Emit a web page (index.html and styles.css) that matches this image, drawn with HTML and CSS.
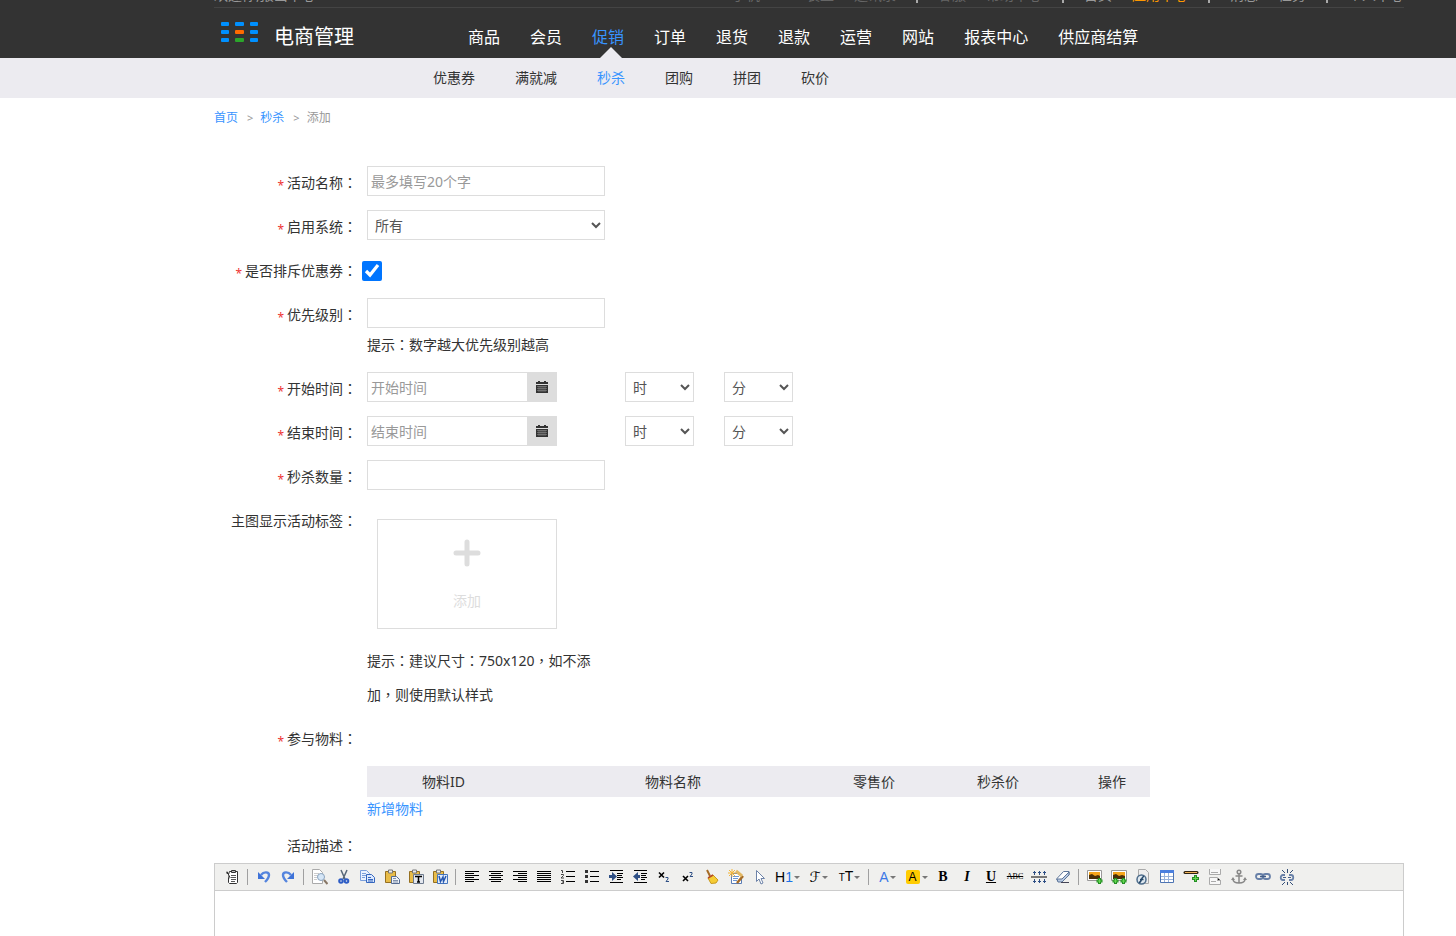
FILE: index.html
```html
<!DOCTYPE html>
<html lang="zh-CN">
<head>
    <meta charset="UTF-8">
    <title>电商管理</title>
    <link rel="stylesheet" href="styles.css">
</head>
<body>
    <header class="header">
        <div class="topbar">
            <span class="welcome">欢迎你,报出中心</span>
            <a class="dim" href="#">手机APP</a>
            <a class="dim" href="#">装盘</a>
            <a class="dim" href="#">通讯录</a>
            <i class="bar"></i>
            <a class="dim" href="#">客服</a>
            <a class="dim" href="#">帮助中心</a>
            <i class="bar"></i>
            <a href="#">首页</a>
            <a class="orange" href="#">应用中心</a>
            <i class="bar"></i>
            <a href="#">消息</a>
            <a href="#">任务</a>
            <i class="bar"></i>
            <a href="#">个人中心</a>
        </div>
        <div class="mainbar">
            <a class="logo" href="#">
                <svg width="38" height="22" viewBox="0 0 38 22">
                    <g fill="#0090ff">
                        <rect x="0" y="0" width="8" height="4" rx="1"/><rect x="14" y="0" width="9" height="4" rx="1"/><rect x="29" y="0" width="8" height="4" rx="1"/>
                        <rect x="0" y="8" width="8" height="4" rx="1"/><rect x="29" y="8" width="8" height="4" rx="1"/>
                        <rect x="0" y="16" width="8" height="4" rx="1"/><rect x="29" y="16" width="8" height="4" rx="1"/>
                    </g>
                    <rect x="14" y="8" width="9" height="4" rx="1" fill="#ff6a00"/>
                    <rect x="14" y="16" width="9" height="4" rx="1" fill="#2ba52b"/>
                </svg>
                <span>电商管理</span>
            </a>
            <nav class="nav">
                <a href="#">商品</a>
                <a href="#">会员</a>
                <a class="active" href="#">促销</a>
                <a href="#">订单</a>
                <a href="#">退货</a>
                <a href="#">退款</a>
                <a href="#">运营</a>
                <a href="#">网站</a>
                <a href="#">报表中心</a>
                <a href="#">供应商结算</a>
            </nav>
        </div>
    </header>
    <nav class="subnav">
        <a href="#">优惠券</a>
        <a href="#">满就减</a>
        <a class="active" href="#">秒杀</a>
        <a href="#">团购</a>
        <a href="#">拼团</a>
        <a href="#">砍价</a>
    </nav>

    <main class="main">
        <div class="crumb">
            <a href="#">首页</a><i>&gt;</i><a href="#">秒杀</a><i>&gt;</i><span>添加</span>
        </div>
        <form class="form">
            <div class="row">
                <label for="name"><em>*</em>活动名称<b lang="zh-TW">：</b></label>
                <div><input class="text" type="text" id="name" placeholder="最多填写20个字"></div>
            </div>
            <div class="row">
                <label for="system"><em>*</em>启用系统<b lang="zh-TW">：</b></label>
                <div><select id="system"><option>所有</option></select></div>
            </div>
            <div class="row">
                <label for="exclude"><em>*</em>是否排斥优惠券<b lang="zh-TW">：</b></label>
                <div><input class="check" type="checkbox" id="exclude" checked></div>
            </div>
            <div class="row">
                <label for="level"><em>*</em>优先级别<b lang="zh-TW">：</b></label>
                <div>
                    <input class="text" type="text" id="level">
                    <p class="hint">提示<b lang="zh-TW">：</b>数字越大优先级别越高</p>
                </div>
            </div>
            <div class="row">
                <label for="start"><em>*</em>开始时间<b lang="zh-TW">：</b></label>
                <div class="time">
                    <div class="date">
                        <input class="text" type="text" id="start" placeholder="开始时间">
                        <button type="button" aria-label="选择开始时间"><svg width="12" height="12" viewBox="0 0 12 12"><path fill="#333" d="M0 1h2V0h2v1h4V0h2v1h2v2H0zM0 4h12v8H0z"/><path stroke="#999" stroke-width=".5" d="M1 5.500h10M1 7.500h10M1 9.500h10M3 5v6M5 5v6M7 5v6M9 5v6"/></svg></button>
                    </div>
                    <select aria-label="开始时"><option>时</option></select>
                    <select aria-label="开始分"><option>分</option></select>
                </div>
            </div>
            <div class="row">
                <label for="end"><em>*</em>结束时间<b lang="zh-TW">：</b></label>
                <div class="time">
                    <div class="date">
                        <input class="text" type="text" id="end" placeholder="结束时间">
                        <button type="button" aria-label="选择结束时间"><svg width="12" height="12" viewBox="0 0 12 12"><path fill="#333" d="M0 1h2V0h2v1h4V0h2v1h2v2H0zM0 4h12v8H0z"/><path stroke="#999" stroke-width=".5" d="M1 5.500h10M1 7.500h10M1 9.500h10M3 5v6M5 5v6M7 5v6M9 5v6"/></svg></button>
                    </div>
                    <select aria-label="结束时"><option>时</option></select>
                    <select aria-label="结束分"><option>分</option></select>
                </div>
            </div>
            <div class="row">
                <label for="count"><em>*</em>秒杀数量<b lang="zh-TW">：</b></label>
                <div><input class="text" type="text" id="count"></div>
            </div>
            <div class="row">
                <label for="upload">主图显示活动标签<b lang="zh-TW">：</b></label>
                <div>
                    <button class="upload" type="button" id="upload">
                        <svg width="28" height="28" viewBox="0 0 28 28"><path stroke="#ddd" stroke-width="5" stroke-linecap="round" d="M14 3v22M3 14h22"/></svg>
                        <span>添加</span>
                    </button>
                    <p class="hint">提示<b lang="zh-TW">：</b>建议尺寸<b lang="zh-TW">：</b>750x120<b lang="zh-TW">，</b>如不添加<b lang="zh-TW">，</b>则使用默认样式</p>
                </div>
            </div>
            <div class="row">
                <span class="label"><em>*</em>参与物料<b lang="zh-TW">：</b></span>
            </div>
            <div class="goods">
                <table>
                    <thead>
                        <tr><th>物料ID</th><th>物料名称</th><th>零售价</th><th>秒杀价</th><th>操作</th></tr>
                    </thead>
                </table>
                <a href="#">新增物料</a>
            </div>
            <div class="row desc">
                <label for="desc">活动描述<b lang="zh-TW">：</b></label>
            </div>
            <div class="editor">
                <div class="toolbar">
                    <button type="button" title="HTML代码"><svg viewBox="0 0 16 16"><path fill="#fff" stroke="#333" d="M5.5 2.5h8v11l-1 1h-7l-1-1v-8z"/><path fill="#bbb" stroke="#333" d="M7.500 1.500h4v2h-4zM2 3.500l3 2M3 2.500l3 6-1 1"/><path stroke="#555" d="M7 6.500h5M7 8.500h5M7 10.500h5M7 12.500h4"/></svg></button>
                    <i></i>
                    <button type="button" title="后退"><svg viewBox="0 0 16 16"><path fill="none" stroke="#5585de" stroke-width="2.400" d="M5 6c3-4 8-3 8 0 0 3-2 5-4 7"/><path fill="#3f73d8" d="M2 3v7h7z"/></svg></button>
                    <button type="button" title="前进"><svg viewBox="0 0 16 16"><path fill="none" stroke="#5585de" stroke-width="2.400" d="M11 6C8 2 3 3 3 6c0 3 2 5 4 7"/><path fill="#3f73d8" d="M14 3v7H7z"/></svg></button>
                    <i></i>
                    <button type="button" title="预览"><svg viewBox="0 0 16 16"><path fill="#fff" stroke="#aaa" d="M.5.5h7l3 3v11H.500z"/><path stroke="#ccc" d="M2 4.500h5M2 6.500h4M2 8.500h3M2 10.500h3"/><circle cx="9" cy="8" r="3.500" fill="#d5e6f7" stroke="#8aa3bd"/><path stroke="#876" stroke-width="2" d="M12 11l3.500 4"/></svg></button>
                    <button type="button" title="剪切"><svg viewBox="0 0 16 16"><path stroke="#567" stroke-width="1.500" d="M5 1l4 9M11 1L7 10"/><g fill="none" stroke="#2d5cc5" stroke-width="2"><circle cx="5" cy="12" r="1.800"/><circle cx="10.500" cy="12" r="1.800"/></g></svg></button>
                    <button type="button" title="复制"><svg viewBox="0 0 16 16"><path fill="#eaf2ff" stroke="#7a9fdc" d="M.5 1.500h6l3 3v7h-9z"/><path stroke="#7a9fdc" d="M2 4.500h4M2 6.500h4M2 8.500h3"/><path fill="#dce9ff" stroke="#3566bd" d="M6.500 5.500h5l3 3v5h-8z"/><path stroke="#3566bd" d="M8 8.500h3M8 10.500h5M8 12h5"/></svg></button>
                    <button type="button" title="粘贴"><svg viewBox="0 0 16 16"><path fill="#e8bc48" stroke="#967020" d="M1.500 2.500h10v11h-10z"/><path fill="#eee" stroke="#777" d="M4.500 1h4v3h-4z"/><path fill="#edf1f8" stroke="#556b91" d="M7.500 7.500h5l3 3v4h-8z"/><path stroke="#8293ad" d="M9 9.500h3M9 11.500h5M9 13h5"/></svg></button>
                    <button type="button" title="粘贴为无格式文本"><svg viewBox="0 0 16 16"><path fill="#e8bc48" stroke="#967020" d="M1.500 2.500h10v11h-10z"/><path fill="#eee" stroke="#777" d="M4.500 1h4v3h-4z"/><path fill="#e4e8ef" stroke="#6e7b8e" d="M5.500 5.500h10v9h-10z"/><path stroke="#000" stroke-width="1.500" d="M7 7.500h7M10.500 7v6M9 13h3"/></svg></button>
                    <button type="button" title="从Word粘贴"><svg viewBox="0 0 16 16"><path fill="#e8bc48" stroke="#967020" d="M1.500 2.500h10v11h-10z"/><path fill="#eee" stroke="#777" d="M4.500 1h4v3h-4z"/><path fill="#e4edfa" stroke="#4576bd" d="M5.500 5.500h10v9h-10z"/><path fill="none" stroke="#2457b0" stroke-width="1.500" d="M7 7l1.500 5.500L11 8l.5 4.500L14 7"/></svg></button>
                    <i></i>
                    <button type="button" title="左对齐"><svg viewBox="0 0 16 16"><path stroke="#000" d="M1 2.500h14M1 4.500h9M1 6.500h14M1 8.500h9M1 10.500h14M1 12.500h9"/></svg></button>
                    <button type="button" title="居中"><svg viewBox="0 0 16 16"><path stroke="#000" d="M1 2.500h14M3 4.500h10M1 6.500h14M3 8.500h10M1 10.500h14M3 12.500h10"/></svg></button>
                    <button type="button" title="右对齐"><svg viewBox="0 0 16 16"><path stroke="#000" d="M1 2.500h14M6 4.500h9M1 6.500h14M6 8.500h9M1 10.500h14M6 12.500h9"/></svg></button>
                    <button type="button" title="两端对齐"><svg viewBox="0 0 16 16"><path stroke="#000" d="M1 2.500h14M1 4.500h14M1 6.500h14M1 8.500h14M1 10.500h14M1 12.500h14"/></svg></button>
                    <button type="button" title="编号"><svg viewBox="0 0 16 16"><path stroke="#000" d="M6 2.500h9M6 7.500h9M6 12.500h9"/><path fill="none" stroke="#444" d="M1 1.500h1.500V4M1 5.500h2.500v1L1 9h3M1 11.500h2.500v3H1M2 13h1.500"/></svg></button>
                    <button type="button" title="项目符号"><svg viewBox="0 0 16 16"><path stroke="#000" d="M6 2.500h9M6 7.500h9M6 12.500h9"/><path fill="#333" d="M1 1h3v3H1zM1 6h3v3H1zM1 11h3v3H1z"/></svg></button>
                    <button type="button" title="增加缩进"><svg viewBox="0 0 16 16"><path stroke="#000" d="M2 1.500h13M9 4.500h6M9 6.500h5M9 8.500h6M9 10.500h4M2 13.500h13"/><path fill="#2e4f85" d="M1 6h3V3l5 4.500L4 12V9H1z"/></svg></button>
                    <button type="button" title="减少缩进"><svg viewBox="0 0 16 16"><path stroke="#000" d="M2 1.500h13M9 4.500h6M9 6.500h5M9 8.500h6M9 10.500h4M2 13.500h13"/><path fill="#2e4f85" d="M8 6H6V3L1 7.500 6 12V9h2z"/></svg></button>
                    <button type="button" title="下标"><svg viewBox="0 0 16 16"><path stroke="#000" stroke-width="1.600" d="M3 3.500l5 5M8 3.500l-5 5"/><path fill="none" stroke="#2e4f85" d="M9.500 8.500h2.500v1.500l-2 2.500h3"/></svg></button>
                    <button type="button" title="上标"><svg viewBox="0 0 16 16"><path stroke="#000" stroke-width="1.600" d="M3 7l5 5M8 7l-5 5"/><path fill="none" stroke="#2e4f85" d="M9.500 3.500h2.500V5l-2 2.500h3"/></svg></button>
                    <button type="button" title="清理代码"><svg viewBox="0 0 16 16"><path stroke="#a66b25" stroke-width="2" d="M3 1l3 6"/><path fill="#f5cc34" stroke="#c99a20" d="M4 9l5-3 5 5-2 3-5 .5z"/><path stroke="#b64b25" stroke-width="1.500" d="M4 9l5-3"/></svg></button>
                    <button type="button" title="一键排版"><svg viewBox="0 0 16 16"><path fill="#fff" stroke="#5b7db5" d="M3.500 4.500h9l1 2v8h-10z"/><path stroke="#6e96cf" d="M5 7.500h6M5 9.500h5M5 11.500h4"/><path stroke="#f3b437" d="M0 4h8M4 0v8M1 1l6 6M7 1L1 7"/><path stroke="#a66b25" stroke-width="2.500" d="M15 7l-6 7"/><path stroke="#e2b863" stroke-width="3" d="M8 2l6 5"/></svg></button>
                    <button type="button" title="全选"><svg viewBox="0 0 16 16"><path fill="#fff" stroke="#6d83a8" d="M4.500 1.500v11l2.500-2.500 2 5 2-1-2-4.500h3.500z"/></svg></button>
                    <button class="wide h1" type="button" title="段落"><span>H<u>1</u></span></button>
                    <button class="wide script" type="button" title="字体"><span>ℱ</span></button>
                    <button class="wide size" type="button" title="文字大小"><span><small>T</small>T</span></button>
                    <i></i>
                    <button class="wide color" type="button" title="文字颜色"><span>A</span></button>
                    <button class="wide back" type="button" title="文字背景"><span>A</span></button>
                    <button class="serif bold" type="button" title="粗体">B</button>
                    <button class="serif italic" type="button" title="斜体">I</button>
                    <button class="serif under" type="button" title="下划线">U</button>
                    <button class="serif strike" type="button" title="删除线">ABC</button>
                    <button type="button" title="行距"><svg viewBox="0 0 16 16"><path stroke="#777" stroke-width="2" d="M0 8h16"/><path fill="none" stroke="#2e4f85" d="M3.500 6V2M2 3.500h3M8.500 6V2M7 3.500h3M13.500 6V2M12 3.500h3M3.500 10v4M2 12.500h3M8.500 10v4M7 12.500h3M13.500 10v4M12 12.500h3"/></svg></button>
                    <button type="button" title="删除格式"><svg viewBox="0 0 16 16"><path fill="#fff" stroke="#5e7699" d="M1.500 10l7-7.500h5.500v3l-7 7H3z"/><path fill="#b8c9e2" stroke="#5e7699" d="M2 10h5l7-7v3l-7 7H3z"/><path stroke="#445" d="M6 13.500h8"/></svg></button>
                    <i></i>
                    <button type="button" title="图片"><svg viewBox="0 0 16 16"><path fill="#fff" stroke="#999" d="M.5 1.500h14v10H.500z"/><path fill="#f6a51b" d="M2 3h11v7H2z"/><path fill="#4a2f08" d="M2 6l3-1 3 2 3-1 2 1v3H2z"/><path stroke="#248f24" stroke-width="3" d="M12.500 9v6M9.500 12h6"/><path stroke="#67d951" d="M12.500 10v4M10.500 12h4"/></svg></button>
                    <button type="button" title="批量图片上传"><svg viewBox="0 0 16 16"><path fill="#fff" stroke="#999" d="M.5 1.500h15v10H.500z"/><path fill="#f6a51b" d="M2 3h12v7H2z"/><path fill="#4a2f08" d="M2 6l3-1 3 2 3-1 3 1v3H2z"/><path stroke="#248f24" stroke-width="3" d="M4.500 9v6M1.500 12h6M12.500 9v6M9.500 12h6"/><path stroke="#67d951" d="M4.500 10v4M2.500 12h4M12.500 10v4M10.500 12h4"/></svg></button>
                    <button type="button" title="Flash"><svg viewBox="0 0 16 16"><path fill="#eee" stroke="#aaa" d="M3.500.5h7l3 3v11h-10z"/><circle cx="6.500" cy="10.500" r="4.500" fill="#dfe8ef" stroke="#4d6c8a" stroke-width="1.500"/><path fill="none" stroke="#234668" stroke-width="1.500" d="M9 7.500c-3 0-2 6-5 6M5 10.500h3.500"/></svg></button>
                    <button type="button" title="表格"><svg viewBox="0 0 16 16"><path fill="#fff" stroke="#4d74b2" d="M1.500 1.500h13v12h-13z"/><path fill="#4b80df" d="M1 1h14v3H1z"/><path stroke="#99b3db" d="M2 7.500h12M2 10.500h12M5.500 4v9M9.500 4v9"/></svg></button>
                    <button type="button" title="插入横线"><svg viewBox="0 0 16 16"><path stroke="#302414" stroke-width="3" stroke-linecap="round" d="M2 3.500h12"/><path stroke="#efb35a" d="M2 3.500h12"/><path stroke="#248f24" stroke-width="3" d="M12.500 6v7M9 9.500h7"/><path stroke="#67d951" d="M12.500 7v5M10 9.500h5"/></svg></button>
                    <button type="button" title="插入分页符"><svg viewBox="0 0 16 16"><path fill="#f7f7f7" stroke="#aaa" d="M2.500 0v5.500h11V0M2.500 15.500v-7h8l3 3v4z"/><path stroke="#aaa" d="M10.500 9v2.500h3M4 3.500h7M4 12.500h5"/></svg></button>
                    <button type="button" title="锚点"><svg viewBox="0 0 16 16"><g fill="none" stroke="#888" stroke-width="1.500"><circle cx="8" cy="3" r="1.800"/><path d="M8 5v9M4.500 7h7M2 10c0 3 3 4 6 4s6-1 6-4"/></g><path fill="#888" d="M0 11l2-3 2 3zM12 11l2-3 2 3z"/></svg></button>
                    <button type="button" title="超级链接"><svg viewBox="0 0 16 16"><g fill="none" stroke="#6880a8" stroke-width="1.800"><rect x="1" y="5" width="7" height="5" rx="2.500"/><rect x="8" y="5" width="7" height="5" rx="2.500"/></g><path stroke="#435d88" stroke-width="1.500" d="M5 7.500h6"/></svg></button>
                    <button type="button" title="取消超级链接"><svg viewBox="0 0 16 16"><g fill="none" stroke="#6880a8" stroke-width="1.800"><path d="M6 6H4C1 6 1 11 4 11h2M10 6h2c3 0 3 5 0 5h-2"/></g><path stroke="#435d88" stroke-width="1.200" d="M4 8.500h3M9 8.500h3"/><path stroke="#354f78" d="M8.500 4V0M6 4L3 1M11 4l3-3M8.500 13v3M6 13l-3 3M11 13l3 3"/></svg></button>
                </div>
                <textarea id="desc"></textarea>
            </div>
        </form>
    </main>
</body>
</html>
```
FILE: styles.css
```css
* {
    box-sizing: border-box;
}
body {
    display: flex;
    flex-direction: column;
    min-height: 100vh;
    margin: 0;
    color: #333;
    background: #fff;
    font-family: "Noto Sans", "Noto Sans CJK SC", sans-serif;
    font-size: 14px;
}
a {
    color: #3894ff;
    text-decoration: none;
}
i, em {
    font-style: normal;
}
input, select, button, textarea {
    font-family: inherit;
    font-size: 14px;
}

/* header */
.header {
    padding: 0 52px 0 214px;
    background: #333;
}
.topbar {
    display: flex;
    align-items: flex-end;
    gap: 20px;
    height: 8px;
    padding-bottom: 2px;
    overflow: hidden;
    border-bottom: 1px solid #444;
    line-height: 20px;
    color: #999;
    white-space: nowrap;
}
.topbar a {
    color: #999;
}
.topbar .welcome {
    margin-right: auto;
}
.topbar .dim {
    color: #666;
}
.topbar .orange {
    color: #ff9900;
}
.topbar .bar {
    width: 2px;
    height: 12px;
    margin-bottom: 2px;
    background: #aaa;
}
.mainbar {
    display: flex;
    height: 50px;
}
.logo {
    display: flex;
    gap: 15px;
    width: 254px;
    padding: 14px 0 0 7px;
    color: #fff;
    font-size: 20px;
    line-height: 30px;
}
.nav {
    display: flex;
    gap: 30px;
    white-space: nowrap;
}
.nav a {
    position: relative;
    color: #fff;
    font-size: 16px;
    line-height: 58px;
}
.nav .active, .subnav .active {
    color: #3894ff;
}
.nav .active::after {
    content: "";
    position: absolute;
    left: 50%;
    top: 39px;
    margin-left: -8px;
    border: 11px solid transparent;
    border-top: 0;
    border-bottom-color: #ecebf0;
}
.subnav {
    display: flex;
    gap: 40px;
    height: 40px;
    padding-left: 433px;
    background: #ecebf0;
    line-height: 40px;
}
.subnav a {
    color: #333;
}

/* form */
.main, .form, .editor {
    display: flex;
    flex-direction: column;
    flex: 1;
}
.main {
    padding: 0 52px 0 214px;
}
.crumb {
    height: 40px;
    margin-bottom: 28px;
    color: #999;
    font-size: 12px;
    line-height: 40px;
}
.crumb i {
    padding: 0 7px 0 9px;
    font-size: 11px;
}
.row {
    display: grid;
    grid-template-columns: 143px 1fr;
    gap: 10px;
    min-height: 34px;
    margin-bottom: 10px;
}
.row label, .label {
    height: 34px;
    text-align: right;
    line-height: 34px;
}
.row em {
    margin-right: 3px;
    color: #e33;
    font-size: 12px;
    line-height: 1;
    vertical-align: -2px;
}
/* full-width punctuation sits in the middle of its box */
.row b {
    font-family: "Noto Sans CJK TC", sans-serif;
    font-weight: normal;
    line-height: 1;
}
.text, select {
    display: block;
    width: 238px;
    height: 30px;
    border: 1px solid #ddd;
    border-radius: 0;
    background: #fff;
    color: #555;
}
.text {
    padding: 0 3px;
}
.text::placeholder {
    color: #999;
}
select {
    padding: 0 3px;
}
.check {
    display: block;
    width: 20px;
    height: 20px;
    margin: 7px 0 0 -5px;
    accent-color: #0075ff;
}
.hint {
    width: 238px;
    margin: 0;
    line-height: 34px;
}
.time {
    display: flex;
    gap: 30px;
}
.time select {
    width: 69px;
}
.date {
    display: flex;
    width: 190px;
    height: 30px;
    margin-right: 38px;
}
.date .text {
    width: 160px;
    border-right: 0;
}
.date button {
    width: 30px;
    padding: 0;
    border: 0;
    background: #ddd;
    line-height: 12px;
}
.upload {
    display: flex;
    flex-direction: column;
    align-items: center;
    gap: 24px;
    width: 180px;
    height: 110px;
    margin: 15px 10px;
    padding: 19px 0 0;
    border: 1px solid #ddd;
    background: #fff;
    color: #ddd;
    line-height: 20px;
}
.goods {
    display: flex;
    flex-direction: column;
    max-width: 936px;
    margin-left: 153px;
    line-height: 24px;
}
.goods table {
    width: 783px;
    border-collapse: collapse;
    table-layout: fixed;
    background: #ecebf0;
}
.goods th {
    height: 31px;
    padding: 0;
    font-weight: normal;
}
.goods th:nth-child(1) { width: 153px; }
.goods th:nth-child(2) { width: 306px; }
.goods th:nth-child(3) { width: 96px; }
.goods th:nth-child(4) { width: 152px; }
.goods a {
    margin-bottom: 8px;
}
.desc {
    margin-bottom: 0;
}

/* editor */
.editor {
    border: 1px solid #ccc;
    border-bottom: 0;
}
.toolbar {
    display: flex;
    align-items: center;
    height: 27px;
    padding-left: 5px;
    border-bottom: 1px solid #ccc;
    background: #f0f0ee;
}
.toolbar i {
    width: 1px;
    height: 16px;
    margin: 0 4px 0 3px;
    background: #a0a0a0;
}
.toolbar button {
    display: flex;
    align-items: center;
    justify-content: center;
    width: 24px;
    height: 24px;
    padding: 0;
    border: 0;
    background: none;
    color: #000;
    line-height: 16px;
}
.toolbar svg {
    width: 16px;
    height: 16px;
}
.toolbar .wide {
    gap: 1px;
    width: 31px;
    font-family: "Liberation Sans", Arial, sans-serif;
}
.toolbar .wide::after {
    content: "";
    border: 3px solid transparent;
    border-top-color: #777;
    border-bottom: 0;
}
.toolbar u {
    color: #1a73e8;
    text-decoration: none;
}
.toolbar .script {
    font-family: "DejaVu Sans", sans-serif;
}
.toolbar small {
    font-size: 10px;
}
.toolbar .color, .toolbar .back {
    width: 29px;
}
.toolbar .color {
    color: #3b78e7;
}
.toolbar .back {
    gap: 2px;
}
.toolbar .back span {
    width: 14px;
    height: 14px;
    border-radius: 2px;
    background: #ffcc00;
    font-size: 12px;
    line-height: 14px;
}
.toolbar .serif {
    font-family: "Liberation Serif", serif;
    font-weight: bold;
}
.toolbar .italic {
    font-style: italic;
}
.toolbar .under {
    text-decoration: underline;
}
.toolbar .strike {
    font-size: 8px;
    font-weight: normal;
    text-decoration: line-through;
}
.editor textarea {
    display: block;
    flex: 1;
    width: 100%;
    min-height: 40px;
    border: 0;
    outline: 0;
    resize: none;
}
```
